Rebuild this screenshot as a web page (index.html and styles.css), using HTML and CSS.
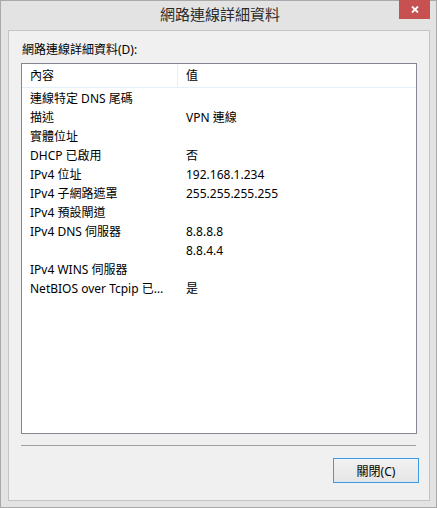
FILE: index.html
```html
<!DOCTYPE html>
<html lang="zh-Hant">
  <head>
    <meta charset="UTF-8" />
    <title>網路連線詳細資料</title>
    <link rel="stylesheet" href="styles.css">
  </head>
  <body>
    <div class="dialog">
      <div class="titlebar">
        <span></span>
        <span class="title">網路連線詳細資料</span>
        <button class="close-btn" aria-label="關閉">
          <svg width="8" height="7" viewBox="0 0 8 7">
            <path d="M1 0.5 L7 6.5 M7 0.5 L1 6.5" stroke="#fff" stroke-width="1.8" />
          </svg>
        </button>
      </div>

      <div class="panel">
        <div class="label">網路連線詳細資料(D):</div>

        <div class="listview">
          <div class="list-head">
            <div class="cell col-name">內容</div>
            <div class="cell col-value">值</div>
          </div>
          <div class="row"><div class="cell col-name">連線特定 DNS 尾碼</div><div class="cell col-value"></div></div>
          <div class="row"><div class="cell col-name">描述</div><div class="cell col-value">VPN 連線</div></div>
          <div class="row"><div class="cell col-name">實體位址</div><div class="cell col-value"></div></div>
          <div class="row"><div class="cell col-name">DHCP 已啟用</div><div class="cell col-value">否</div></div>
          <div class="row"><div class="cell col-name">IPv4 位址</div><div class="cell col-value">192.168.1.234</div></div>
          <div class="row"><div class="cell col-name">IPv4 子網路遮罩</div><div class="cell col-value">255.255.255.255</div></div>
          <div class="row"><div class="cell col-name">IPv4 預設閘道</div><div class="cell col-value"></div></div>
          <div class="row"><div class="cell col-name">IPv4 DNS 伺服器</div><div class="cell col-value">8.8.8.8</div></div>
          <div class="row"><div class="cell col-name"></div><div class="cell col-value">8.8.4.4</div></div>
          <div class="row"><div class="cell col-name">IPv4 WINS 伺服器</div><div class="cell col-value"></div></div>
          <div class="row"><div class="cell col-name">NetBIOS over Tcpip 已啟用</div><div class="cell col-value">是</div></div>
        </div>

        <div class="separator"></div>

        <div class="buttons">
          <button class="push-btn">關閉(C)</button>
        </div>
      </div>
    </div>
  </body>
</html>
```

FILE: styles.css
```css
* {
  box-sizing: border-box;
}

body {
  margin: 0;
  font-family: "Noto Sans", "Noto Sans CJK TC", sans-serif;
  font-size: 12px;
  color: #000;
  background: #fff;
}

.dialog {
  width: 437px;
  height: 508px;
  border: 1px solid #a9a9a9;
  background-color: #e3e3e3;
  padding: 0 6px 6px 7px;
  display: flex;
  flex-direction: column;
}

.titlebar {
  height: 29px;
  display: grid;
  grid-template-columns: 1fr auto 1fr;
  align-items: start;
}

.title {
  font-size: 15px;
  color: #2b2b2b;
  line-height: 29px;
  margin-top: -1px;
  padding-left: 2px;
}

.close-btn {
  justify-self: end;
  width: 31px;
  height: 19px;
  margin-top: -1px;
  border: none;
  padding: 0;
  background-color: #c75050;
  display: flex;
  align-items: center;
  justify-content: center;
}

.panel {
  flex: 1;
  border: 1px solid #c4c4c4;
  background-color: #f0f0f0;
  padding: 0 12px 0 12px;
  display: flex;
  flex-direction: column;
}

.label {
  height: 32px;
  line-height: 17px;
  padding: 10px 0 0 1px;
}

.listview {
  height: 371px;
  border: 1px solid #828790;
  background-color: #fff;
}

.list-head {
  display: flex;
  height: 24px;
  border-bottom: 1px solid #e5eefb;
}

.list-head .cell {
  line-height: 23px;
}

.list-head .col-name {
  border-right: 1px solid #e5eefb;
}

.row {
  display: flex;
  height: 19px;
}

.row .cell {
  line-height: 19px;
}

.cell {
  white-space: nowrap;
  overflow: hidden;
  text-overflow: ellipsis;
  padding-left: 8px;
}

.col-name {
  width: 156px;
  padding-right: 3px;
}

.col-value {
  flex: 1;
}

.row:nth-child(2) {
  margin-top: 1px;
}

.separator {
  margin-top: 11px;
  height: 1px;
  background-color: #a0a0a0;
  margin-right: 1px;
}

.buttons {
  display: flex;
  justify-content: flex-end;
  margin-top: 12px;
  margin-right: -2px;
}

.push-btn {
  width: 86px;
  height: 25px;
  border: 1px solid #3c9be8;
  background: linear-gradient(#f2f2f2, #e5e5e5);
  font-family: "Noto Sans", "Noto Sans CJK TC", sans-serif;
  font-size: 12px;
  color: #000;
  padding: 0;
}
```
